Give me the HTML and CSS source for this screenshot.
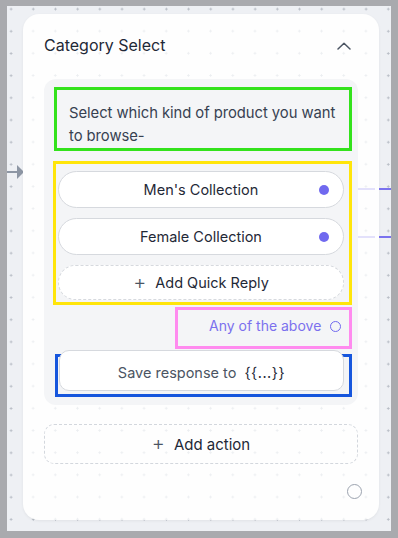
FILE: index.html
```html
<!DOCTYPE html>
<html lang="en">
<head>
    <meta charset="UTF-8">
    <meta name="viewport" content="width=device-width, initial-scale=1.0">
    <title>Category Select</title>
    <link rel="stylesheet" href="styles.css">
</head>
<body>
    <div class="canvas">
        <div class="in-edge">
            <span class="in-line"></span>
            <span class="in-head"></span>
        </div>
        <span class="out-edge out-one"><i class="soft"></i><i class="hard"></i></span>
        <span class="out-edge out-two"><i class="soft"></i><i class="hard"></i></span>

        <div class="card">
            <div class="card-head">
                <h1 class="title">Category Select</h1>
                <svg class="chevron" width="14" height="8" viewBox="0 0 14 8">
                    <path d="M1 7 L7 1.2 L13 7" fill="none" stroke="#4b5563" stroke-width="1.5" stroke-linecap="round" stroke-linejoin="round"/>
                </svg>
            </div>

            <div class="panel">
                <div class="mark mark-green">
                    <p class="question">Select which kind of product you want to browse-</p>
                </div>

                <div class="mark mark-yellow">
                    <div class="reply">Men's Collection<span class="port"></span></div>
                    <div class="reply">Female Collection<span class="port"></span></div>
                    <div class="reply add-reply"><span class="plus">+</span>Add Quick Reply</div>
                </div>

                <div class="mark mark-pink">
                    <span class="fallback">Any of the above</span>
                    <span class="ring"></span>
                </div>

                <div class="mark mark-blue">
                    <div class="save">Save response to <span class="var">{{...}}</span></div>
                </div>
            </div>

            <div class="add-action"><span class="plus">+</span>Add action</div>

            <div class="card-foot">
                <span class="end-ring"></span>
            </div>
        </div>
    </div>
</body>
</html>
```

FILE: styles.css
```css
body {
    margin: 0;
    padding: 6px 7px 7px;
    background-color: #a9aaae;
    font-family: 'Inter', 'Liberation Sans', sans-serif;
    color: #1f2937;
}
.canvas {
    position: relative;
    height: 525px;
    background-color: #eef0f4;
    background-image: radial-gradient(circle, #b7bcc5 0.9px, transparent 1.3px);
    background-size: 22.2px 22.2px;
    background-position: -7px -8px;
    overflow: hidden;
}
.in-edge {
    position: absolute;
    left: 0;
    top: 159px;
    display: flex;
    align-items: center;
}
.in-line {
    width: 10px;
    height: 2px;
    background: #8d96a4;
}
.in-head {
    width: 0;
    height: 0;
    border-top: 7px solid transparent;
    border-bottom: 7px solid transparent;
    border-left: 7px solid #8d96a4;
}
.out-edge {
    position: absolute;
    left: 351px;
    display: flex;
    z-index: 2;
}
.out-edge .soft {
    width: 17px;
    height: 2px;
    background: #e3e1fb;
}
.out-edge .hard {
    width: 12px;
    height: 2px;
    margin-left: 4px;
    background: #7a72ee;
}
.out-one {
    top: 182px;
}
.out-two {
    top: 230px;
}
.card {
    position: relative;
    z-index: 1;
    box-sizing: border-box;
    width: 356px;
    height: 506px;
    margin: 8px 0 0 16px;
    padding: 22px 21px 0;
    background-color: #fefefe;
    background-image: radial-gradient(circle, #eceef1 0.9px, transparent 1.3px);
    background-size: 22.2px 22.2px;
    background-position: -1px 6px;
    border-radius: 16px;
    box-shadow: 0 1px 3px rgba(0, 0, 0, 0.06);
}
.card-head {
    display: flex;
    justify-content: space-between;
    align-items: center;
    height: 18px;
}
.title {
    margin: 0;
    font-size: 16px;
    font-weight: 400;
    line-height: 18px;
    color: #1f2937;
}
.chevron {
    margin-right: 7px;
    margin-top: 2px;
}
.panel {
    box-sizing: border-box;
    margin-top: 25px;
    height: 326px;
    padding: 8px 6px 8px 0;
    background: #f4f5f7;
    border-radius: 12px;
}
.mark {
    box-sizing: border-box;
    border: 3px solid;
}
.mark-green {
    margin-left: 10px;
    height: 64px;
    padding: 12px 0 0 12px;
    border-color: #33e21c;
}
.question {
    margin: 0;
    font-size: 14.8px;
    line-height: 23px;
    letter-spacing: -0.05px;
    color: #374151;
}
.mark-yellow {
    margin: 10px 0 0 9px;
    height: 144px;
    padding: 7px 5px 2px 2px;
    border-color: #ffe50a;
    display: flex;
    flex-direction: column;
    gap: 10px;
}
.reply {
    position: relative;
    box-sizing: border-box;
    height: 37px;
    display: flex;
    align-items: center;
    justify-content: center;
    background: #ffffff;
    border: 1.5px solid #d6d9de;
    border-radius: 20px;
    font-size: 14.5px;
    color: #1f2937;
}
.port {
    position: absolute;
    right: 14px;
    top: 13px;
    width: 10px;
    height: 10px;
    border-radius: 50%;
    background: #7069ef;
}
.add-reply {
    height: 35px;
    border: 1.5px dashed #d6d9de;
}
.plus {
    font-size: 20px;
    font-weight: 300;
    color: #4b5563;
    margin-right: 9px;
    line-height: 1;
    margin-top: -2px;
}
.mark-pink {
    margin: 2px 0 0 131px;
    height: 42px;
    padding: 0 0 6px 31px;
    border-color: #ff8bef;
    display: flex;
    align-items: center;
}
.fallback {
    font-size: 14px;
    color: #7b70ee;
}
.ring {
    width: 9px;
    height: 9px;
    margin-left: 9px;
    margin-top: 3px;
    border: 1.5px solid #7069ef;
    border-radius: 50%;
}
.mark-blue {
    margin: 5px 0 0 11px;
    height: 43px;
    border-color: #1656dd;
}
.save {
    box-sizing: border-box;
    height: 41px;
    width: 285px;
    margin: -7px 0 0 1px;
    padding-top: 4px;
    display: flex;
    align-items: center;
    justify-content: center;
    background: #ffffff;
    border: 1.5px solid #d6d9de;
    border-radius: 10px;
    font-size: 14.5px;
    color: #4b5563;
}
.var {
    margin-left: 8px;
    color: #1f2937;
    letter-spacing: 0.5px;
}
.add-action {
    box-sizing: border-box;
    height: 40px;
    margin-top: 19px;
    display: flex;
    align-items: center;
    justify-content: center;
    border: 1.5px dashed #d3d7dd;
    border-radius: 10px;
    font-size: 15px;
    color: #1f2937;
}
.card-foot {
    display: flex;
    justify-content: flex-end;
    margin-top: 20px;
    margin-right: -4px;
}
.end-ring {
    box-sizing: border-box;
    width: 15px;
    height: 15px;
    border: 1.5px solid #9ca3af;
    border-radius: 50%;
}
```
